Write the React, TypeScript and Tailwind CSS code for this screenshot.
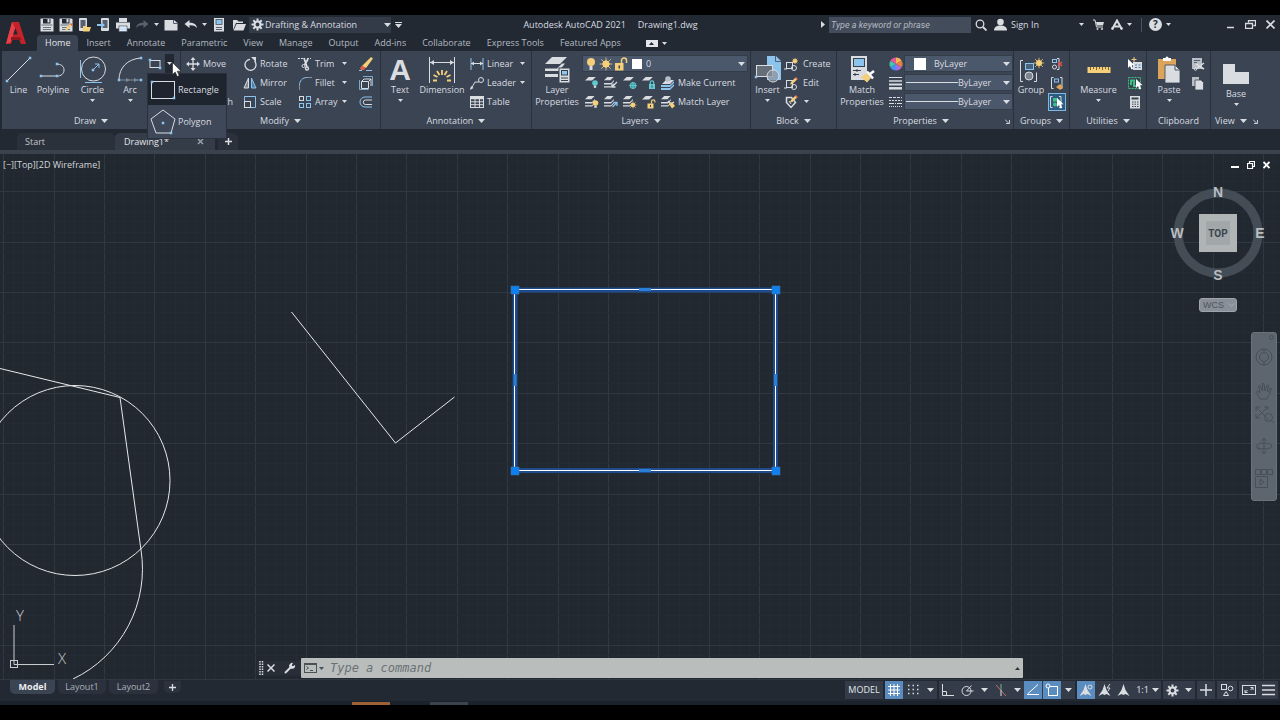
import type { ReactNode } from "react";

const LIGHT = "#d9dce0";
const BLUE = "#8cc4ee";
const YELLOW = "#f5cf7a";
const TEAL = "#62c9cf";
const GREEN = "#3fbf83";
const ORANGE = "#dca35a";

interface IconProps {
  w?: number;
  h?: number;
  children: ReactNode;
}

function Icon({ w = 14, h = 14, children }: IconProps) {
  return (
    <svg width={w} height={h} viewBox={`0 0 ${w} ${h}`} fill="none" stroke={LIGHT} className="shrink-0" aria-hidden="true">
      {children}
    </svg>
  );
}

function Caret({ wide = false }: { wide?: boolean }) {
  return wide ? (
    <svg width="7" height="4" viewBox="0 0 7 4" fill="#d9dce0" className="shrink-0" aria-hidden="true">
      <path d="M0 0h7L3.5 4z" />
    </svg>
  ) : (
    <svg width="5" height="3" viewBox="0 0 5 3" fill="#d9dce0" className="shrink-0" aria-hidden="true">
      <path d="M0 0h5L2.5 3z" />
    </svg>
  );
}

// square node used at the end points of the draw icons
const Node = ({ x, y }: { x: number; y: number }) => (
  <rect x={x - 1} y={y - 1} width="2" height="2" fill={BLUE} stroke={BLUE} strokeWidth="0.5" />
);

const Sheet = ({ y = 0, x = 0, s = 1 }: { y?: number; x?: number; s?: number }) => (
  <path d={`M${x + 4 * s} ${y}h${8 * s}l${-4 * s} ${4 * s}h${-8 * s}z`} fill={LIGHT} stroke="none" />
);

const Stack = () => (
  <g stroke="none">
    <Sheet x={0} y={1} s={0.8} />
    <path d="M0 7h7l3-3v1.3L7 8.500H0zM0 10.300h7l3-3v1.300l-3 3H0z" fill={LIGHT} />
  </g>
);

const Bulb = ({ x, y, c }: { x: number; y: number; c: string }) => (
  <g stroke="none">
    <circle cx={x} cy={y} r="2.800" fill={c} />
    <rect x={x - 1.2} y={y + 2.6} width="2.4" height="2.2" fill={LIGHT} />
  </g>
);

const Padlock = ({ x, y, c, open = false }: { x: number; y: number; c: string; open?: boolean }) => (
  <g>
    <path d={open ? `M${x + 4} ${y}v-2a1.700 1.700 0 0 1 3.400 0v1` : `M${x + 1.300} ${y}v-1.500a1.700 1.700 0 0 1 3.400 0V${y}`} stroke={c} strokeWidth="1.200" />
    <rect x={x} y={y} width="6" height="5" fill={c} stroke="none" />
    <rect x={x + 2.5} y={y + 1.5} width="1" height="2" fill="#3b4453" stroke="none" />
  </g>
);

const Sun = ({ x, y, r = 2.2, c = YELLOW }: { x: number; y: number; r?: number; c?: string }) => (
  <g stroke={c} strokeWidth="1">
    <circle cx={x} cy={y} r={r} fill={c} />
    <path
      d={`M${x} ${y - r * 2}V${y + r * 2}M${x - r * 2} ${y}H${x + r * 2}M${x - r * 1.5} ${y - r * 1.5}L${x + r * 1.5} ${y + r * 1.5}M${x + r * 1.5} ${y - r * 1.5}L${x - r * 1.5} ${y + r * 1.5}`}
      strokeWidth="0.800"
    />
  </g>
);

const Pencil = ({ x, y, s = 1 }: { x: number; y: number; s?: number }) => (
  <g stroke="none" transform={`translate(${x} ${y}) scale(${s})`}>
    <path d="M0 7.500L1 5l4.500-4.500L7.300 2.300 2.500 7z" fill={YELLOW} />
    <path d="M5 1L6 0l2 2-1 1z" fill="#e0604f" />
  </g>
);

const Cursor = ({ x, y }: { x: number; y: number }) => (
  <path d={`M${x} ${y}v9l2-2 1.500 3.500 1.700-.8L${x + 3.700} ${y + 6.300}h2.800z`} fill="#fff" stroke="none" />
);

const Gear = ({ c = LIGHT, hole = "#3b4453" }: { c?: string; hole?: string }) => (
  <Icon w={13} h={13}>
    <circle cx="6.500" cy="6.500" r="4" fill={c} stroke="none" />
    <path d="M6.500 .5v12M.5 6.500h12M2.300 2.300l8.400 8.400M10.700 2.300l-8.400 8.400" stroke={c} strokeWidth="2" />
    <circle cx="6.500" cy="6.500" r="1.900" fill={hole} stroke="none" />
  </Icon>
);

/* ---------- quick access toolbar ---------- */

const Floppy = () => (
  <>
    <path d="M.5.500h12l1 1v12H.500z" fill={LIGHT} stroke="none" />
    <rect x="3" y="1" width="7.500" height="4.500" fill="#222933" stroke="none" />
    <rect x="7.500" y="1" width="2" height="3.500" fill={LIGHT} stroke="none" />
    <path d="M1.500 7h11M3 9.500h8M3 11.500h8" stroke="#4d5663" strokeWidth=".8" />
  </>
);

const quickTools: { label: string; width: string; icon: ReactNode }[] = [
  { label: "Save", width: "w-[19px]", icon: <Icon><Floppy /></Icon> },
  { label: "Save As", width: "w-[19px]", icon: <Icon><Floppy /><Pencil x={6} y={5} /></Icon> },
  {
    label: "Open from mobile",
    width: "w-[19px]",
    icon: (
      <Icon>
        <rect x="1" y="0" width="8" height="13" rx="1" fill={LIGHT} stroke="none" />
        <rect x="2.500" y="2" width="5" height="8" fill="#566070" stroke="none" />
        <path d="M5 8h3l1 1h4l-1.500 4.500H5z" fill={YELLOW} stroke="none" />
      </Icon>
    ),
  },
  {
    label: "Save to mobile",
    width: "w-[19px]",
    icon: (
      <Icon>
        <rect x="4" y="0" width="8" height="13" rx="1" fill={LIGHT} stroke="none" />
        <rect x="5.500" y="2" width="5" height="8" fill="#566070" stroke="none" />
        <path d="M0 6h4V4l4 3-4 3V8H0z" fill={BLUE} stroke="none" />
      </Icon>
    ),
  },
  {
    label: "Plot",
    width: "w-[19px]",
    icon: (
      <Icon>
        <path d="M3 0h8v4H3zM0 4.500h14v6H0z" fill={LIGHT} stroke="none" />
        <rect x="3" y="8" width="8" height="5.500" fill="#fff" stroke="#566070" strokeWidth=".8" />
        <path d="M4 10h6M4 11.800h6" stroke={BLUE} strokeWidth=".8" />
      </Icon>
    ),
  },
  {
    label: "Redo",
    width: "w-[19px]",
    icon: <Icon><path d="M13.500 6L8.500 2v2.700C4 4.700 1.500 6.500 1 10c2-2.300 4-2.800 7.500-2.700V10z" fill="#59616d" stroke="none" /></Icon>,
  },
  { label: "Redo list", width: "w-[10px]", icon: <Caret /> },
  {
    label: "New",
    width: "w-[20px]",
    icon: <Icon><path d="M.5 2H10l3.500 3v7.500H.500z" fill={LIGHT} stroke="none" /><path d="M9.500 2v3.500h4" stroke="#566070" /></Icon>,
  },
  {
    label: "Undo",
    width: "w-[20px]",
    icon: <Icon><path d="M.5 6l5-4v2.700C10 4.700 12.500 6.500 13 10c-2-2.300-4-2.800-7.500-2.700V10z" fill={LIGHT} stroke="none" /></Icon>,
  },
  { label: "Undo list", width: "w-[7px]", icon: <Caret /> },
  {
    label: "Plot preview",
    width: "w-[21px]",
    icon: (
      <Icon>
        <rect x="2" y="0" width="10" height="13.500" fill={LIGHT} stroke="none" />
        <rect x="4" y="1.500" width="6" height="5" fill={BLUE} stroke="#41505f" strokeWidth=".8" />
        <path d="M4 9.500h6M4 11.500h6" stroke="#566070" />
      </Icon>
    ),
  },
  {
    label: "Open",
    width: "w-[20px]",
    icon: <Icon><path d="M1 12V2h4l1.500 1.500H11V5H4z" fill={LIGHT} stroke="none" /><path d="M4.500 6H14l-2.500 6.500H1.500z" fill={LIGHT} stroke="none" /></Icon>,
  },
];

/* ---------- ribbon parts ---------- */

interface BigButtonProps {
  label: string;
  icon: ReactNode;
  width: string;
  caret?: boolean;
}

function BigButton({ label, icon, width, caret }: BigButtonProps) {
  return (
    <button type="button" className={`flex shrink-0 flex-col items-center pt-[2px] leading-[12px] hover:bg-[#4a5464] ${width}`}>
      <span className="flex h-[28px] items-center">{icon}</span>
      <span className="whitespace-pre-line">{label}</span>
      {caret && <span className="mt-[3px]"><Caret /></span>}
    </button>
  );
}

interface RowButtonProps {
  label: string;
  icon: ReactNode;
  text?: boolean;
  caret?: boolean;
}

function RowButton({ label, icon, text = true, caret }: RowButtonProps) {
  return (
    <button type="button" aria-label={label} className="flex h-[19px] w-full items-center gap-[3px] hover:bg-[#4a5464]">
      {icon}
      {text && <span className="whitespace-nowrap">{label}</span>}
      {caret && <span className="ml-auto"><Caret /></span>}
    </button>
  );
}

interface PanelProps {
  title: string;
  width: string;
  menu?: boolean;
  launcher?: boolean;
  children: ReactNode;
}

function Panel({ title, width, menu = true, launcher, children }: PanelProps) {
  return (
    <section className={`flex flex-col border-r border-[#2a313d] ${width}`}>
      <div className="flex h-[62px] pt-[3px]">{children}</div>
      <div className="flex h-[16px] items-center">
        <button type="button" className="flex flex-1 items-center justify-center gap-[5px]">
          {title}
          {menu && <Caret wide />}
        </button>
        {launcher && (
          <button type="button" aria-label={`${title} settings`} className="mr-[3px]">
            <Icon w={5} h={5}><path d="M0 .5l3.500 3.500M4.500 1v3.500H1" strokeWidth=".9" /></Icon>
          </button>
        )}
      </div>
    </section>
  );
}

interface ComboProps {
  label: string;
  value: string;
  before?: ReactNode;
  className?: string;
}

function Combo({ label, value, before, className = "" }: ComboProps) {
  return (
    <div className={`flex h-[17px] items-center border border-[#343c4a] bg-[#4b576a] ${className}`}>
      {before}
      <select aria-label={label} className="min-w-0 flex-1 appearance-none bg-transparent outline-none">
        <option>{value}</option>
      </select>
      <span className="pointer-events-none px-[2px]"><Caret wide /></span>
    </div>
  );
}

const RectIcon = () => (
  <Icon>
    <rect x="2" y="3.500" width="10" height="7" />
    <Node x={2} y={3} />
    <Node x={12} y={11} />
  </Icon>
);

function DrawPanel() {
  return (
    <div className="relative flex">
      <Panel title="Draw" width="w-[179px]">
        <BigButton label="Line" width="w-[33px]" icon={<Icon w={28} h={28}><path d="M2 25L25 2" /><Node x={2} y={25} /><Node x={25} y={2} /></Icon>} />
        <BigButton
          label="Polyline"
          width="w-[36px]"
          icon={<Icon w={28} h={28}><path d="M2 20h16c4 0 7-2 7-6s-3-6-8-6" /><Node x={2} y={20} /><Node x={18} y={20} /><Node x={18} y={8} /></Icon>}
        />
        <BigButton
          label="Circle"
          width="w-[43px]"
          caret
          icon={
            <Icon w={28} h={28}>
              <circle cx="14.500" cy="13" r="12" />
              <path d="M1.500 4v18M6 26.500h17M14 14l6-6M20 8v4M20 8h-4" stroke={BLUE} />
              <Node x={14} y={14} />
            </Icon>
          }
        />
        <BigButton
          label="Arc"
          width="w-[32px]"
          caret
          icon={<Icon w={28} h={28}><path d="M3 24C3 12 11 3 25 2" /><path d="M3 24h22" stroke="#7f8996" /><path d="M10 22l4 2-4 2zM18 22l4 2-4 2z" fill="#7f8996" stroke="none" /><Node x={3} y={24} /><Node x={25} y={2} /><Node x={25} y={24} /></Icon>}
        />
        <div className="flex w-[28px] flex-col">
          <button type="button" aria-label="Rectangle tools" aria-expanded="true" className="flex h-[19px] items-center gap-[3px] pl-[2px]">
            <RectIcon />
            <span className="flex h-full w-[10px] items-center justify-center bg-[#222831]"><Caret /></span>
          </button>
        </div>
      </Panel>
      <ul className="absolute top-[22px] left-[145px] z-20 w-[80px] border border-[#2a313d] bg-[#3f4858]">
        <li>
          <button type="button" className="flex h-[31px] w-full items-center gap-[2px] bg-[#1f252e] pl-[2px]">
            <Icon w={26} h={22}><rect x="1.500" y="2.500" width="23" height="17" /><Node x={2} y={3} /><Node x={24} y={19} /></Icon>
            Rectangle
          </button>
        </li>
        <li>
          <button type="button" className="flex h-[33px] w-full items-center gap-[2px] pl-[2px]">
            <Icon w={26} h={26}><path d="M13 1l12 9-4 14H6L1 10z" /><Node x={13} y={14} /><Node x={21} y={24} /></Icon>
            Polygon
          </button>
        </li>
      </ul>
      {/* pointer resting on the open fly-out arrow */}
      <svg width="10" height="15" viewBox="0 0 10 15" className="absolute top-[11px] left-[170px] z-30" aria-hidden="true">
        <path d="M.5.500v12l2.700-2.500 2 4.500 2-1-2-4.300h3.800z" fill="#fff" stroke="#222" strokeWidth=".6" />
      </svg>
    </div>
  );
}

function ModifyPanel() {
  return (
    <Panel title="Modify" width="w-[200px]">
      <div className="w-[58px] pl-[5px]">
        <RowButton label="Move" icon={<Icon><path d="M7 2v10M2 7h10" strokeWidth="1.300" /><path d="M7 0l2.500 3h-5zM7 14l2.500-3h-5zM0 7l3-2.500v5zM14 7l-3-2.500v5z" fill={LIGHT} stroke="none" /></Icon>} />
        <RowButton text={false} label="Copy" icon={<Icon><circle cx="5" cy="5" r="3.500" /><circle cx="9" cy="9" r="3.500" stroke={BLUE} /></Icon>} />
        <RowButton label="Stretch" icon={<Icon><rect x="1.500" y="4.500" width="7" height="8" /><path d="M9 4h4v8" stroke={BLUE} /></Icon>} />
      </div>
      <div className="w-[56px] pl-[4px]">
        <RowButton label="Rotate" icon={<Icon><path d="M11.500 4A5.500 5.500 0 1 1 7 2.300" strokeWidth="1.300" /><path d="M8 0h5v5z" fill={LIGHT} stroke="none" /></Icon>} />
        <RowButton label="Mirror" icon={<Icon><path d="M5.500 2v10H1z" fill="#7c8795" /><path d="M8.500 2v10H13z" fill="#4c7ea6" stroke={BLUE} /></Icon>} />
        <RowButton label="Scale" icon={<Icon><path d="M1.500 6.500V1.500h11v11H7.500" stroke={BLUE} /><rect x="1.500" y="6.500" width="6" height="6" /></Icon>} />
      </div>
      <div className="w-[56px] pr-[4px] pl-[3px]">
        <RowButton label="Trim" caret icon={<Icon><path d="M0 1.500h5M9 1.500h4" strokeDasharray="2 1" /><path d="M6 1l3 9M10 2L6.500 8" strokeWidth="1.800" /><circle cx="5.500" cy="9" r="1.500" /><circle cx="9" cy="11.500" r="1.500" strokeWidth="1.400" /></Icon>} />
        <RowButton label="Fillet" caret icon={<Icon><path d="M1.500 14V9C1.500 5 4.500 1.500 9 1.500" stroke={BLUE} /><path d="M9 1.500h5M1.500 9v5" stroke="#87919e" /></Icon>} />
        <RowButton label="Array" caret icon={<Icon><rect x="1.500" y="1.500" width="4" height="4" /><rect x="8.500" y="1.500" width="4" height="4" stroke={BLUE} /><rect x="1.500" y="8.500" width="4" height="4" stroke={BLUE} /><rect x="8.500" y="8.500" width="4" height="4" stroke={BLUE} /></Icon>} />
      </div>
      <div className="w-[22px] pl-[8px]">
        <RowButton text={false} label="Erase" icon={<Icon><path d="M3 9l9-9 2 1.500-7 9.500z" fill={YELLOW} stroke="none" /><path d="M1 11l2-2.500 3.500 2.500L5 13H2z" fill="#e0604f" stroke="none" /><path d="M0 13.500h3M7 13.500h6" stroke={BLUE} /></Icon>} />
        <RowButton text={false} label="Explode" icon={<Icon><path d="M2.500 5.500h7v7h-7zM5 3h7v7M2.500 5.500L5 3M9.500 5.500L12 3" /><path d="M.5 4v9.500h9M4 .5h9.500V10" stroke={BLUE} strokeWidth=".8" /></Icon>} />
        <RowButton text={false} label="Offset" icon={<Icon><path d="M13 2H6a5 5 0 0 0 0 10h7" stroke={BLUE} /><path d="M13 5H6.500a2 2 0 0 0 0 4.500H13" /></Icon>} />
      </div>
    </Panel>
  );
}

function AnnotationPanel() {
  return (
    <Panel title="Annotation" width="w-[151px]">
      <BigButton
        label="Text"
        width="w-[38px]"
        caret
        icon={<span className="font-['Liberation_Sans',sans-serif] text-[30px] leading-[24px] font-bold">A</span>}
      />
      <BigButton
        label="Dimension"
        width="w-[46px]"
        icon={
          <Icon w={28} h={28}>
            <path d="M1.500 1v26M26.500 1v26M2 6.500h24" />
            <path d="M2 6.500l4-2.500v5zM26 6.500l-4-2.500v5z" fill={LIGHT} stroke="none" />
            <path d="M14 14v5M9 15l2.500 4M19 15l-2.500 4M5.500 19l4 2M22.500 19l-4 2M5 24.500h4M19 24.500h4" stroke={YELLOW} strokeWidth="1.800" />
          </Icon>
        }
      />
      <div className="w-[60px] pl-[5px]">
        <RowButton label="Linear" caret icon={<Icon><path d="M1 1v12M13 1v12" stroke={BLUE} /><path d="M1 6.500h12" /><path d="M1 6.500l3-2v4zM13 6.500l-3-2v4z" fill={LIGHT} stroke="none" /></Icon>} />
        <RowButton label="Leader" caret icon={<Icon><path d="M1 13L5 6h4" /><circle cx="11" cy="4" r="2.500" /><path d="M0 14l1-4 2.500 2z" fill={LIGHT} stroke="none" /></Icon>} />
        <RowButton label="Table" icon={<Icon><rect x=".5" y="1.500" width="13" height="11" /><path d="M0 3h14" strokeWidth="2.500" /><path d="M1 6.800h12M1 9.700h12M5 4v8M9.500 4v8" /></Icon>} />
      </div>
    </Panel>
  );
}

const layerTools: { label: string; icon: ReactNode }[][] = [
  [
    { label: "Layer off", icon: <Icon><Sheet x={0} y={1} s={0.9} /><Bulb x={10} y={7} c={TEAL} /></Icon> },
    { label: "Isolate layer", icon: <Icon><Stack /><path d="M13 6l-4 4M8 7.500v3.500h3.500" strokeWidth="1.300" /></Icon> },
    { label: "Freeze layer", icon: <Icon><Sheet x={0} y={1} s={0.9} /><circle cx="10" cy="9.500" r="3" stroke={TEAL} fill="#3a8e96" /><path d="M10 6v7M6.500 9.500h7" stroke={TEAL} /></Icon> },
    { label: "Lock layer", icon: <Icon><Sheet x={0} y={1} s={0.9} /><Padlock x={7} y={8} c={TEAL} /></Icon> },
    { label: "Make Current", icon: <Icon><path d="M0 9h9l4-4v2l-4 4H0zM0 12h9l4-4v2l-4 4H0z" fill={BLUE} stroke="none" /><Sheet x={1} y={4} s={1} /><circle cx="7" cy="3" r="2.800" fill="#b6bdc6" stroke="none" /></Icon> },
  ],
  [
    { label: "Turn all layers on", icon: <Icon><Stack /><Bulb x={10.500} y={8} c={YELLOW} /></Icon> },
    { label: "Unisolate layer", icon: <Icon><Stack /><path d="M8.500 12l4-4M9.500 7.500H13V11" stroke={BLUE} strokeWidth="1.300" /></Icon> },
    { label: "Thaw all layers", icon: <Icon><Stack /><Sun x={10} y={10} r={1.700} /></Icon> },
    { label: "Unlock layer", icon: <Icon><Sheet x={0} y={1} s={0.9} /><Padlock x={5.500} y={8.500} c={YELLOW} open /></Icon> },
    { label: "Match Layer", icon: <Icon><Stack /><path d="M7 6l3 3 3-2" strokeWidth="1.500" /><path d="M8 9l3-2 3 4-3 2.500z" fill={YELLOW} stroke="none" /></Icon> },
  ],
];

function LayersPanel() {
  return (
    <Panel title="Layers" width="w-[219px]">
      <BigButton
        label={"Layer\nProperties"}
        width="w-[50px]"
        icon={
          <Icon w={28} h={28}>
            <path d="M9 1h15l-7 7H2z" fill={LIGHT} stroke="none" />
            <path d="M2 12.500h12l5-5h3l-6 7.500H2z" fill={LIGHT} stroke="none" />
            <path d="M2 18h13v3H2z" fill={LIGHT} stroke="none" />
            <rect x="16" y="12" width="11" height="15" fill={LIGHT} stroke="#3b4453" />
            <rect x="18.500" y="14.500" width="6" height="4.500" fill={BLUE} stroke="#37424f" />
            <path d="M18 22h7M18 24.500h7" stroke="#37424f" />
          </Icon>
        }
      />
      <div className="flex-1">
        <Combo
          label="Current layer"
          value="0"
          className="mt-[1px] mr-[2px] mb-[1px]"
          before={
            <span className="mr-[4px] flex items-center gap-px pl-[1px]">
              <Icon><circle cx="7" cy="5" r="4" fill={YELLOW} stroke="none" /><rect x="5.500" y="9" width="3" height="4" fill={LIGHT} stroke="none" /></Icon>
              <Icon><Sun x={7} y={7} r={3.200} /></Icon>
              <Icon><path d="M7.500 6V3.500a2.500 2.500 0 0 1 5 0V6" stroke={YELLOW} strokeWidth="1.500" /><rect x="1" y="6" width="8.500" height="7.500" fill={YELLOW} stroke="none" /><rect x="4.500" y="8.500" width="1.500" height="3" fill="#3b4453" stroke="none" /></Icon>
              <span className="ml-[3px] h-[10px] w-[10px] bg-white" />
            </span>
          }
        />
        {layerTools.map((row, i) => (
          <div key={i} className="flex h-[19px] items-center gap-[5px] pl-[3px]">
            {row.map((tool, j) => (
              <button key={tool.label} type="button" aria-label={tool.label} className="flex items-center gap-[3px] whitespace-nowrap">
                {tool.icon}
                {j === 4 && <span>{tool.label}</span>}
              </button>
            ))}
          </div>
        ))}
      </div>
    </Panel>
  );
}

function BlockPanel() {
  return (
    <Panel title="Block" width="w-[86px]">
      <BigButton
        label="Insert"
        width="w-[33px]"
        caret
        icon={
          <Icon w={28} h={28}>
            <path d="M13 0h9l5 5v19H13z" fill={BLUE} stroke="none" />
            <path d="M21.500 0v5.500H27" stroke="#3b4453" strokeWidth=".8" />
            <rect x="2.500" y="9.500" width="16" height="11" fill="#666e79" />
            <circle cx="19" cy="20" r="6" fill="#8b939d" fillOpacity=".7" />
            <Node x={2} y={21} />
          </Icon>
        }
      />
      <div className="w-[50px]">
        <RowButton label="Create" icon={<Icon w={16}><rect x="2.500" y="5.500" width="6" height="6" /><circle cx="10" cy="11" r="2.500" /><path d="M0 12h3" /><Sun x={11} y={4} r={1.500} /></Icon>} />
        <RowButton label="Edit" icon={<Icon w={16}><rect x="2.500" y="4.500" width="6" height="7" /><circle cx="10" cy="11" r="2.500" /><path d="M0 12h3" /><Pencil x={6} y={1} /></Icon>} />
        <button type="button" aria-label="Edit attributes" className="flex h-[19px] items-center gap-[4px]">
          <Icon w={16}><path d="M2.500 2.500h5l4 5-4.500 5-4.500-5z" strokeWidth="1.500" /><path d="M5 6l2 3" /><Pencil x={6} y={0} /></Icon>
          <Caret />
        </button>
      </div>
    </Panel>
  );
}

function PropertiesPanel() {
  return (
    <Panel title="Properties" width="w-[177px]" launcher>
      <BigButton
        label={"Match\nProperties"}
        width="w-[50px]"
        icon={
          <Icon w={28} h={28}>
            <path d="M3 0h16v24H3z" fill={LIGHT} stroke="none" />
            <rect x="5.500" y="2.500" width="11" height="8" fill={BLUE} stroke="#37424f" />
            <path d="M5 14.500h8M5 18.500h6M9 13v3M7 17v3" stroke="#37424f" />
            <path d="M13 21l6-4 4 5-4 4.500z" fill={YELLOW} stroke="none" />
            <path d="M19 15.500l6 7" stroke="#fff" strokeWidth="2.500" />
            <path d="M22 18l4-3" stroke="#fff" strokeWidth="2.500" />
          </Icon>
        }
      />
      <div className="flex w-[17px] flex-col items-center">
        <span className="flex h-[19px] items-center">
          <Icon>
            <g stroke="none">
              <path d="M7 7V.5a6.500 6.500 0 0 1 5.600 3.200z" fill="#f3b552" />
              <path d="M7 7l5.600-3.300a6.500 6.500 0 0 1 0 6.600z" fill="#ef7c45" />
              <path d="M7 7l5.600 3.300A6.500 6.500 0 0 1 7 13.500z" fill="#a46de0" />
              <path d="M7 7v6.500a6.500 6.500 0 0 1-5.600-3.200z" fill="#4f8df0" />
              <path d="M7 7l-5.600 3.300a6.500 6.500 0 0 1 0-6.600z" fill="#45c6a5" />
              <path d="M7 7L1.400 3.700A6.500 6.500 0 0 1 7 .5z" fill="#e4589b" />
            </g>
          </Icon>
        </span>
        <span className="flex h-[19px] items-center"><Icon><path d="M0 1.500h13" /><path d="M0 5h13" strokeWidth="1.500" /><path d="M0 8.500h13" strokeWidth="2" /><path d="M0 12.300h13" strokeWidth="2.500" /></Icon></span>
        <span className="flex h-[19px] items-center"><Icon><path d="M0 2.500h13" strokeDasharray="3 1" /><path d="M0 5.500h13" strokeDasharray="2 1" /><path d="M0 8.500h13" strokeDasharray="5 1 1 1" /><path d="M0 11.500h13" strokeDasharray="1 1" /></Icon></span>
      </div>
      <div className="flex flex-1 flex-col gap-[2px] pt-[1px]">
        <Combo label="Object color" value="ByLayer" before={<span className="mr-[8px] ml-[9px] h-[12px] w-[12px] bg-white" />} />
        <Combo label="Lineweight" value="ByLayer" before={<span className="ml-[1px] h-px w-[52px] bg-[#d9dce0]" />} />
        <Combo label="Linetype" value="ByLayer" before={<span className="ml-[1px] h-px w-[52px] bg-[#d9dce0]" />} />
      </div>
    </Panel>
  );
}

const Brackets = () => <path d="M3.500 1.500h-2v11h2M10 1.500h2v11h-2" />;

function GroupsPanel() {
  return (
    <Panel title="Groups" width="w-[56px]">
      <BigButton
        label="Group"
        width="w-[34px]"
        icon={
          <Icon w={28} h={28}>
            <path d="M6 4.500H3.500v21H6M17 25.500h2.500v-9" />
            <rect x="8.500" y="7.500" width="8" height="6" stroke={BLUE} fill="#47637d" />
            <circle cx="12" cy="20" r="4" fill="#7c8591" />
            <Sun x={22} y={7} r={2.600} />
          </Icon>
        }
      />
      <div className="flex flex-col items-center">
        <RowButton text={false} label="Ungroup" icon={<Icon w={18}><path d="M9 1.500h2v11H9" /><rect x="4.500" y="2.500" width="4" height="3" stroke={BLUE} /><circle cx="6.500" cy="10" r="2" /><path d="M10 5l4 4M14 5l-4 4" stroke="#e0504a" strokeWidth="1.500" /></Icon>} />
        <RowButton text={false} label="Group edit" icon={<Icon w={18}><g transform="translate(2 0)"><Brackets /><rect x="4.500" y="3" width="4" height="3" stroke={BLUE} /><path d="M6 11l4-3 3 3-3 3z" fill={ORANGE} stroke="none" /></g></Icon>} />
        <button type="button" aria-label="Group selection on/off" aria-pressed="true" className="mt-[1px] flex h-[18px] w-[18px] items-center justify-center border border-[#7fb8e6] bg-[#2f5b80]">
          <Icon w={16}><Brackets /><rect x="4" y="3" width="5" height="3.500" fill={GREEN} stroke="none" /><circle cx="6" cy="9.500" r="2" fill={GREEN} stroke="none" /><Cursor x={8} y={3} /></Icon>
        </button>
      </div>
    </Panel>
  );
}

function UtilitiesPanel() {
  return (
    <Panel title="Utilities" width="w-[77px]">
      <BigButton
        label="Measure"
        width="w-[57px]"
        caret
        icon={
          <Icon w={28} h={28}>
            <rect x="2.500" y="11" width="23" height="6" fill={YELLOW} stroke="none" />
            <path d="M5.500 11v3M8.500 11v2M11.500 11v3M14.500 11v2M17.500 11v3M20.500 11v2M23.500 11v3" stroke="#7a6433" />
          </Icon>
        }
      />
      <div className="flex flex-col">
        <RowButton text={false} label="Quick select" icon={<Icon w={16}><rect x="6" y="5" width="9" height="8" fill={LIGHT} stroke="none" /><path d="M8 8h2M11.500 8h2M8 10.500h2M11.500 10.500h2" stroke="#3f81b8" /><Cursor x={1} y={2} /><path d="M7 0v5M4.500 2.500h5" stroke={YELLOW} /></Icon>} />
        <RowButton text={false} label="Select all" icon={<Icon w={16}><rect x="1.500" y="1.500" width="12" height="11" stroke={GREEN} strokeDasharray="2 1" /><path d="M4 9V4.500h3V10h3" stroke={GREEN} strokeWidth="2" /><Cursor x={9} y={3} /></Icon>} />
        <RowButton text={false} label="Quick calculator" icon={<Icon w={16}><rect x="3" y="1" width="10" height="12.500" fill={LIGHT} stroke="none" /><path d="M4.500 3.500h7" stroke="#37424f" strokeWidth="2" /><path d="M5 7h6.500M5 9.200h6.500M5 11.500h6.500" stroke="#37424f" strokeDasharray="1.500 1" /></Icon>} />
      </div>
    </Panel>
  );
}

function ClipboardPanel() {
  return (
    <Panel title="Clipboard" width="w-[64px]" menu={false}>
      <BigButton
        label="Paste"
        width="w-[44px]"
        caret
        icon={
          <Icon w={28} h={28}>
            <rect x="3" y="3" width="18" height="20" fill={ORANGE} stroke="none" />
            <path d="M8 5V2h2.500a1.500 1.500 0 0 1 3 0H16v3z" fill="#fff" stroke="none" />
            <path d="M10 9h10l5 5v13H10z" fill={LIGHT} stroke="#3b4453" strokeWidth=".8" />
            <path d="M20 9v5h5" stroke="#4d5663" />
          </Icon>
        }
      />
      <div className="flex flex-col">
        <RowButton text={false} label="Cut" icon={<Icon><rect x="1" y="1" width="10" height="11" fill="#b9bec5" stroke="none" /><path d="M3 3.500h6M3 5.500h3" stroke="#566070" /><path d="M5 12l8-6M5 7l8 5" strokeWidth="1.500" /><circle cx="4.500" cy="12" r="1.300" /></Icon>} />
        <RowButton text={false} label="Copy clip" icon={<Icon><path d="M1 1h7v9H1z" fill="#b9bec5" stroke="none" /><path d="M4 4h6l2.500 2.500V14H4z" fill={LIGHT} stroke="#3b4453" strokeWidth=".8" /></Icon>} />
      </div>
    </Panel>
  );
}

function ViewPanel() {
  return (
    <section className="flex min-w-[66px] flex-1 flex-col">
      <div className="flex h-[62px] pt-[7px]">
        <BigButton label="Base" width="w-[50px]" caret icon={<Icon w={28} h={28}><path d="M1 4h12v8h14v12H1z" fill={LIGHT} stroke="none" /></Icon>} />
      </div>
      <div className="flex h-[16px] items-center gap-[6px] pl-[4px]">
        <button type="button" className="flex items-center gap-[5px]">View<Caret wide /></button>
        <button type="button" aria-label="View settings"><Icon w={5} h={5}><path d="M0 .5l3.500 3.500M4.500 1v3.500H1" strokeWidth=".9" /></Icon></button>
      </div>
    </section>
  );
}

/* ---------- header ---------- */

const ribbonTabs = ["Home", "Insert", "Annotate", "Parametric", "View", "Manage", "Output", "Add-ins", "Collaborate", "Express Tools", "Featured Apps"];

function Header() {
  return (
    <header className="flex">
      <button type="button" aria-label="Application menu" className="w-[37px] shrink-0 pl-[5px]">
        <svg width="22" height="24" viewBox="0 0 22 24" aria-hidden="true">
          <path d="M7 1h7l7 22h-5l-2.500-6H7.500L6 23H1z" fill="#c5232b" />
          <path d="M7 1L1 23l5-2 4-14z" fill="#e8414a" />
          <path d="M10.500 7l-2.300 6.500h4.500z" fill="#222933" />
          <path d="M6 16h9l1.500 3H6z" fill="#8e1a20" />
        </svg>
      </button>
      <div className="min-w-0 flex-1">
        <div className="flex h-[19px] items-center">
          {quickTools.map((tool) => (
            <button key={tool.label} type="button" aria-label={tool.label} className={`flex shrink-0 justify-center ${tool.width}`}>
              {tool.icon}
            </button>
          ))}
          <div className="flex h-[16px] w-[142px] shrink-0 items-center bg-[#333b48] pl-[2px]">
            <Gear hole="#333b48" />
            <select aria-label="Workspace" className="ml-px min-w-0 flex-1 appearance-none bg-transparent outline-none">
              <option>Drafting &amp; Annotation</option>
            </select>
            <span className="pointer-events-none"><Caret wide /></span>
          </div>
          <button type="button" aria-label="Customize toolbar" className="flex w-[14px] shrink-0 justify-center">
            <Icon w={7} h={6}><path d="M0 .5h7" /><path d="M0 2h7L3.500 6z" fill={LIGHT} stroke="none" /></Icon>
          </button>
          <h1 className="flex flex-1 justify-center gap-[12px] whitespace-nowrap">
            <span>Autodesk AutoCAD 2021</span>
            <span>Drawing1.dwg</span>
          </h1>
          <button type="button" aria-label="Collapse search" className="flex w-[13px] justify-center">
            <Icon w={4} h={7}><path d="M0 0l4 3.500L0 7z" fill={LIGHT} stroke="none" /></Icon>
          </button>
          <input
            type="text"
            aria-label="Search"
            placeholder="Type a keyword or phrase"
            className="h-[16px] w-[142px] bg-[#434c5b] px-[2px] font-['Roboto',sans-serif] italic placeholder-[#b4b9c0] outline-none"
          />
          <button type="button" aria-label="Run search" className="flex w-[20px] justify-center">
            <Icon w={12} h={12}><circle cx="5" cy="5" r="3.800" strokeWidth="1.300" /><path d="M8 8l3.500 3.500" strokeWidth="1.800" /></Icon>
          </button>
          <button type="button" className="flex w-[83px] items-center gap-[4px] pl-[3px]">
            <Icon w={13} h={13}><circle cx="6.500" cy="4" r="3.300" fill={LIGHT} stroke="none" /><path d="M0 12.500c0-3.500 2.500-5 6.500-5s6.500 1.500 6.500 5z" fill={LIGHT} stroke="none" /></Icon>
            Sign In
          </button>
          <button type="button" aria-label="Account menu" className="flex w-[14px] justify-center"><Caret /></button>
          <button type="button" aria-label="App store" className="flex w-[20px] justify-center">
            <Icon w={11} h={11}><path d="M0 1h2l1.500 7h6.500" /><path d="M3 3h8l-1 3.500H3.800z" fill={LIGHT} stroke="none" /><circle cx="4.500" cy="10" r=".7" /><circle cx="9" cy="10" r=".7" /></Icon>
          </button>
          <button type="button" aria-label="Stay connected" className="flex w-[26px] items-center gap-[4px] pl-[3px]">
            <Icon w={12} h={11}><path d="M1.500 9.500L6 1.500l4.500 8M3 7.500h6" strokeWidth="2" /><circle cx="1.500" cy="9.500" r="1" fill={LIGHT} /><circle cx="10.500" cy="9.500" r="1" fill={LIGHT} /></Icon>
            <Caret />
          </button>
          <span className="mx-[7px] h-[14px] w-px bg-[#4b5461]" />
          <button type="button" aria-label="Help" className="flex w-[72px] items-center gap-[4px]">
            <span className="flex h-[13px] w-[13px] items-center justify-center rounded-full bg-[#d9dce0] text-[10px] leading-[13px] font-bold text-[#222933]">?</span>
            <Caret />
          </button>
          <button type="button" aria-label="Minimize" className="flex w-[19px] justify-center"><Icon w={7} h={9}><path d="M0 7.500h7" strokeWidth="1.500" /></Icon></button>
          <button type="button" aria-label="Restore" className="flex w-[20px] justify-center"><Icon w={11} h={9}><path d="M3.500 2.500v-2h7v5h-2M.5 3.500h7v5h-7z" strokeWidth="1.300" /></Icon></button>
          <button type="button" aria-label="Close" className="flex w-[20px] justify-center"><Icon w={9} h={9}><path d="M.5.500l8 8M8.500.500l-8 8" strokeWidth="1.600" /></Icon></button>
        </div>
        <nav className="flex h-[17px] items-end text-[#b3b9c1]">
          {ribbonTabs.map((tab, i) => (
            <a
              key={tab}
              href={`#${tab}`}
              className={`flex h-[16px] shrink-0 items-center px-[8px] ${i === 0 ? "rounded-t-sm bg-[#3b4453] text-[#e4e6e9]" : ""}`}
            >
              {tab}
            </a>
          ))}
          <button type="button" aria-label="Minimize ribbon" className="ml-[17px] flex h-[16px] items-center gap-[4px]">
            <span className="flex h-[7px] w-[12px] items-center justify-center bg-[#e4e6e9]"><Icon w={5} h={3}><path d="M0 3h5L2.500 0z" fill="#222933" stroke="none" /></Icon></span>
            <Caret />
          </button>
        </nav>
      </div>
    </header>
  );
}

/* ---------- drawing area ---------- */

const GRID = 50.4;

function Drawing() {
  const columns = Array.from({ length: 200 }, (_, i) => i);
  const rows = Array.from({ length: 110 }, (_, i) => i);
  return (
    <svg className="absolute inset-0 h-full w-full" fill="none" aria-label="Model space">
      <g shapeRendering="crispEdges">
        {columns.map((i) => {
          const x = Math.floor(3.7 + (i * GRID) / 5) + 0.5;
          return <line key={i} x1={x} x2={x} y1="0" y2="100%" stroke={i % 5 === 0 ? "#303942" : "#242b34"} />;
        })}
        {rows.map((i) => {
          const y = Math.floor(37.7 + ((i - 3) * GRID) / 5) + 0.5;
          return <line key={i} x1="0" x2="100%" y1={y} y2={y} stroke={i % 5 === 3 ? "#303942" : "#242b34"} />;
        })}
      </g>
      <g stroke="#e6e8ea">
        <polyline points="291.500,158 395.500,289 454.500,243" />
        <circle cx="75" cy="326.500" r="95" />
        <path d="M0 214.500L120 243.500L141 396A122 122 0 0 1 73 525" />
      </g>
      <g>
        <rect x="515" y="136" width="260.500" height="180.500" stroke="#1f4a8c" strokeWidth="5" />
        <rect x="514.500" y="135.500" width="261" height="181" stroke="#fff" shapeRendering="crispEdges" />
        {[[515, 136], [776, 136], [515, 317], [776, 317]].map(([x, y]) => (
          <rect key={`${x}-${y}`} x={x - 4} y={y - 4} width="8" height="8" fill="#0f80f0" stroke="#3d6f9f" strokeWidth=".6" />
        ))}
        <path d="M639 135.500h12M639 316.500h12" stroke="#2a7fd4" strokeWidth="3" />
        <path d="M515 220v12M775.500 220v12" stroke="#2a7fd4" strokeWidth="3" />
      </g>
      <g stroke="#c9cccf">
        <path d="M14 471v39.500H54" />
        <rect x="10.500" y="506.500" width="7" height="7" />
      </g>
      <g fill="#c9cccf" className="font-['Open_Sans',sans-serif] text-[15px] font-light" textAnchor="middle">
        <text x="20" y="467">Y</text>
        <text x="62" y="510">X</text>
      </g>
    </svg>
  );
}

function ViewCube() {
  return (
    <div className="absolute top-[29px] right-[10px] flex w-[104px] flex-col items-center text-[#b9bdc0]">
      <svg width="104" height="104" viewBox="0 0 104 104" className="font-['Liberation_Sans',sans-serif] text-[14px] font-bold" textAnchor="middle" aria-label="View cube">
        <circle cx="52" cy="50" r="40" fill="none" stroke="#444c55" strokeWidth="9" />
        <g fill="#b9bdc0">
          <text x="52" y="14">N</text>
          <text x="11" y="55">W</text>
          <text x="94" y="55">E</text>
          <text x="52" y="97">S</text>
        </g>
        <rect x="33" y="31" width="38" height="38" fill="#b0b4b5" />
        <rect x="40" y="38" width="24" height="24" fill="#a2a7a9" />
        <text x="52" y="54" fill="#3c444c" className="font-['Roboto',sans-serif] text-[10px] font-bold">TOP</text>
      </svg>
      <button type="button" className="mt-[11px] flex h-[14px] w-[38px] items-center gap-[4px] rounded-[3px] border border-[#a0a5ab] bg-[#888f98] pl-[3px] font-['Liberation_Sans',sans-serif] text-[#4d555e]">
        WCS
        <Icon w={7} h={4}><path d="M.5.500l3 2.500 3-2.500" stroke="#a9aeb4" /></Icon>
      </button>
    </div>
  );
}

function NavigationBar() {
  const tool = "flex w-full justify-center";
  return (
    <div className="absolute top-[178px] right-[3px] flex h-[169px] w-[26px] flex-col items-center rounded-[3px] border border-[#6a727a] bg-[#5d666e] [&_svg]:stroke-[#474f58]">
      <div className="flex w-full justify-end p-[2px]"><Icon w={5} h={5}><circle cx="2.500" cy="2.500" r="2" /></Icon></div>
      <button type="button" aria-label="Steering wheel" className={`mt-[6px] ${tool}`}><Icon w={18} h={18}><circle cx="9" cy="9" r="8" /><circle cx="9" cy="9" r="4.500" /><path d="M9 1v3M9 14v3" /></Icon></button>
      <button type="button" aria-label="Pan" className={`mt-[16px] ${tool}`}><Icon w={18} h={18}><path d="M5 17L1 10l1.500-1L5 11 3.500 4l1.500-.5L7.500 9 7.500 1.500H9L10 9l2-6 1.500.5L12.500 10 15.500 6l1 .7L14 13l-2 4z" /></Icon></button>
      <button type="button" aria-label="Zoom" className={`mt-[5px] ${tool}`}><Icon w={20} h={18}><path d="M2 2l13 13M14 2L2 13M2 6V2h4M10 2h4v3M2 9v4h4" /><circle cx="14.500" cy="12.500" r="4" /><path d="M17 15l3 3" /></Icon></button>
      <button type="button" aria-label="Orbit" className={`mt-[15px] ${tool}`}><Icon w={18} h={16}><ellipse cx="9" cy="8" rx="8" ry="3" /><path d="M9 0v16M6.500 3L9 0l2.500 3M6.500 13L9 16l2.500-3M4 8l-2 2 3 2" /></Icon></button>
      <button type="button" aria-label="Show motion" className={`mt-[15px] ${tool}`}><Icon w={18} h={19}><path d="M.5.500h5v5h-5zM6.500.500h5v5h-5zM12.500.500h5v5h-5zM.5 7.500h12v11H.500zM5 10v6l4-3z" /></Icon></button>
    </div>
  );
}

function CommandLine() {
  return (
    <form className="absolute right-[257px] bottom-[1px] left-[257px] flex h-[20px] items-center text-[#d9dce0]">
      <span className="flex w-[44px] shrink-0 items-center bg-[#272e38] pl-[2px]">
        <Icon w={5} h={14}><path d="M1 0v14M3.500 0v14" strokeDasharray="1.500 1" strokeWidth="1.500" /></Icon>
        <button type="button" aria-label="Close command line" className="ml-[3px]"><Icon w={8} h={8}><path d="M.5.500l7 7M7.500.500l-7 7" strokeWidth="1.500" /></Icon></button>
        <button type="button" aria-label="Customize command line" className="ml-[9px]">
          <Icon w={12} h={12}><path d="M1 11l6-6" strokeWidth="2" /><path d="M11 3A3 3 0 1 1 9 1L7.800 3.200l1 1z" fill={LIGHT} stroke="none" /></Icon>
        </button>
      </span>
      <div className="flex h-full min-w-0 flex-1 items-center rounded-[1px] bg-[#b9bebd] pl-[3px]">
        <Icon w={13} h={10}><rect x=".5" y=".5" width="12" height="9" stroke="#4a5054" /><path d="M1 1.500h11" stroke="#4a5054" /><path d="M2.500 3.500l2 1.500-2 1.500M6 7.500h3" stroke="#4a5054" /></Icon>
        <Icon w={9} h={3}><path d="M2 0h5L4.500 3z" fill="#4a5054" stroke="none" /></Icon>
        <input
          type="text"
          aria-label="Command"
          placeholder="Type a command"
          className="ml-[4px] min-w-0 flex-1 bg-transparent font-['DejaVu_Sans_Mono',monospace] text-[12px] text-[#333] italic placeholder-[#6b7174] outline-none"
        />
        <button type="button" aria-label="Command history" className="px-[3px]"><Icon w={5} h={3}><path d="M0 3h5L2.500 0z" fill="#333" stroke="none" /></Icon></button>
      </div>
    </form>
  );
}

function DrawingArea() {
  return (
    <main className="relative min-h-[400px] flex-1 overflow-hidden bg-[#212830]">
      <Drawing />
      <div className="absolute top-[5px] left-[3px] flex text-[#d3d6d9]">
        <button type="button">[−]</button>
        <button type="button">[Top]</button>
        <button type="button">[2D Wireframe]</button>
      </div>
      <div className="absolute top-[7px] right-[10px] flex items-center gap-[8px]">
        <button type="button" aria-label="Minimize drawing"><Icon w={8} h={8}><path d="M0 6h8" stroke="#fff" strokeWidth="2" /></Icon></button>
        <button type="button" aria-label="Restore drawing"><Icon w={8} h={8}><path d="M2.500 2.500v-2h5v5h-2M.5 2.500h5v5h-5z" stroke="#fff" strokeWidth="1.200" /></Icon></button>
        <button type="button" aria-label="Close drawing"><Icon w={7} h={8}><path d="M.5 1l6 6M6.500 1l-6 6" stroke="#fff" strokeWidth="1.800" /></Icon></button>
      </div>
      <ViewCube />
      <NavigationBar />
      <CommandLine />
    </main>
  );
}

/* ---------- footer ---------- */

interface StatusButtonProps {
  label: string;
  width?: string;
  on?: boolean;
  children: ReactNode;
}

function StatusButton({ label, width = "w-[18px]", on, children }: StatusButtonProps) {
  return (
    <button
      type="button"
      aria-label={label}
      aria-pressed={on}
      className={`flex h-[18px] shrink-0 items-center justify-center ${width} ${on ? "bg-[#5b8cc0]" : ""}`}
    >
      {children}
    </button>
  );
}

const StatusGroup = ({ children }: { children: ReactNode }) => <div className="flex items-center gap-px bg-[#343c4a]">{children}</div>;

const Person = ({ extra }: { extra?: ReactNode }) => (
  <Icon><path d="M6.500 1l2 6 4 6-4-2-2 1-2-1-4 2 4-6z" fill={LIGHT} stroke="none" />{extra}</Icon>
);

function StatusBar() {
  return (
    <div className="flex h-[20px] items-center gap-[2px] pr-[2px] text-[#e4e6e9]">
      <StatusGroup><StatusButton label="Model space" width="w-[38px]"><span>MODEL</span></StatusButton></StatusGroup>
      <StatusGroup>
        <StatusButton label="Grid" on><Icon><path d="M3.500 1v12M7 1v12M10.500 1v12M1 3.500h12M1 7h12M1 10.500h12" stroke="#fff" /></Icon></StatusButton>
        <StatusButton label="Snap"><Icon><path d="M2 2.500h11M2 6.500h11M2 10.500h11" strokeWidth="1.500" strokeDasharray="1.500 3" /></Icon></StatusButton>
        <StatusButton label="Snap settings" width="w-[14px]"><Caret wide /></StatusButton>
      </StatusGroup>
      <StatusGroup>
        <StatusButton label="Ortho"><Icon><path d="M1.500 1v11.500H13M1.500 8.500h4v4" /></Icon></StatusButton>
        <StatusButton label="Polar tracking"><Icon><circle cx="6.500" cy="8" r="4.500" /><path d="M6.500 8h7M6.500 8l5-5.500" /></Icon></StatusButton>
        <StatusButton label="Polar settings" width="w-[14px]"><Caret wide /></StatusButton>
        <StatusButton label="Isometric drafting"><Icon><path d="M2 2l5 5.500L12 13" stroke="#d2686c" /><path d="M7 1v6" stroke="#67b78b" /><path d="M7 7v6" /></Icon></StatusButton>
        <StatusButton label="Isometric settings" width="w-[12px]"><Caret wide /></StatusButton>
        <StatusButton label="Object snap tracking" on><Icon><path d="M1.500 11L12 1.500M1 11.500h12" stroke="#fff" /></Icon></StatusButton>
        <StatusButton label="Object snap" on><Icon><rect x="3.500" y="3.500" width="9" height="9" stroke="#fff" /><circle cx="3" cy="3" r="2" fill="#5b8cc0" stroke="#fff" /></Icon></StatusButton>
        <StatusButton label="Object snap settings" width="w-[13px]"><Caret wide /></StatusButton>
      </StatusGroup>
      <StatusGroup>
        <StatusButton label="Annotation visibility" on><Person extra={<circle cx="11" cy="4" r="2" />} /></StatusButton>
        <StatusButton label="Auto scale"><Person extra={<path d="M12 1L9 5h3l-2 3" />} /></StatusButton>
        <StatusButton label="Annotation scale icon"><Person /></StatusButton>
        <StatusButton label="Annotation scale" width="w-[27px]"><span className="flex items-center gap-[3px]">1:1<Caret wide /></span></StatusButton>
      </StatusGroup>
      <StatusGroup>
        <StatusButton label="Workspace switching"><Gear hole="#343c4a" /></StatusButton>
        <StatusButton label="Workspace list" width="w-[13px]"><Caret wide /></StatusButton>
      </StatusGroup>
      <StatusGroup><StatusButton label="Annotation monitor"><Icon><path d="M7 1v12M1 7h12" strokeWidth="1.500" /></Icon></StatusButton></StatusGroup>
      <StatusGroup><StatusButton label="Isolate objects" width="w-[20px]"><Icon><rect x="1.500" y="1.500" width="5" height="5" /><circle cx="10.500" cy="5.500" r="2.300" /><path d="M3.500 12.500h5L6 8.500z" /></Icon></StatusButton></StatusGroup>
      <StatusGroup>
        <StatusButton label="Clean screen" width="w-[20px]"><Icon><rect x=".5" y="2.500" width="13" height="9" /><path d="M3 9.500l2.500-2.500M3 7v2.500h2.500M11 4.500L8.500 7M8.500 4.500H11V7" /></Icon></StatusButton>
        <StatusButton label="Customization"><Icon><path d="M0 2.500h13M0 7h13M0 11.500h13" strokeWidth="1.500" /></Icon></StatusButton>
      </StatusGroup>
    </div>
  );
}

export default function App() {
  return (
    <div className="flex min-h-screen flex-col bg-black py-[15px] font-['Open_Sans',sans-serif] text-[9px] leading-[12px] text-[#d9dce0]">
      <div className="flex flex-1 flex-col bg-[#222933]">
        <Header />
        <div className="flex border-l-2 border-[#222933] bg-[#3b4453]">
          <DrawPanel />
          <ModifyPanel />
          <AnnotationPanel />
          <LayersPanel />
          <BlockPanel />
          <PropertiesPanel />
          <GroupsPanel />
          <UtilitiesPanel />
          <ClipboardPanel />
          <ViewPanel />
        </div>
        <nav className="flex h-[25px] items-end border-b-4 border-[#3a424e] pl-[17px] text-[#c3c7cc]">
          <a href="#start" className="flex h-[17px] w-[98px] items-center rounded-t-[5px] bg-[#2a313b] pl-[8px]">Start</a>
          <div className="flex h-[17px] w-[100px] items-center justify-between rounded-t-[5px] bg-[#343c48] pr-[11px] pl-[9px]">
            <a href="#drawing1" className="text-[#e4e6e9]">Drawing1*</a>
            <button type="button" aria-label="Close Drawing1"><Icon w={7} h={7}><path d="M1 1l5 5M6 1L1 6" stroke="#99a0a9" strokeWidth="1.500" /></Icon></button>
          </div>
          <button type="button" aria-label="New drawing" className="ml-[3px] flex h-[17px] w-[20px] items-center justify-center rounded-t-[5px] bg-[#2a313b]">
            <Icon w={7} h={7}><path d="M3.500 0v7M0 3.500h7" strokeWidth="1.500" /></Icon>
          </button>
        </nav>
        <DrawingArea />
        <footer className="flex h-[22px] justify-between border-t border-[#2f3740]">
          <nav className="flex h-[14px] items-center gap-[3px] pl-[10px] text-[#aab0b8]">
            <a href="#model" className="flex h-full w-[45px] items-center justify-center rounded-b-[5px] bg-[#3b4453] font-bold text-[#eceef0]">Model</a>
            <a href="#layout1" className="flex h-full w-[48px] items-center justify-center rounded-b-[5px] bg-[#2b323d]">Layout1</a>
            <a href="#layout2" className="flex h-full w-[49px] items-center justify-center rounded-b-[5px] bg-[#2b323d]">Layout2</a>
            <button type="button" aria-label="New layout" className="ml-[3px] flex h-[12px] w-[17px] items-center justify-center rounded-b-[5px] bg-[#2b323d]">
              <Icon w={7} h={7}><path d="M3.500 0v7M0 3.500h7" strokeWidth="1.300" /></Icon>
            </button>
          </nav>
          <StatusBar />
        </footer>
        <div className="flex h-[4px] gap-[40px] bg-[#1b222b] pl-[352px]">
          <span className="mt-px w-[38px] bg-[#9c6136]" />
          <span className="mt-px w-[38px] bg-[#3c434c]" />
        </div>
      </div>
    </div>
  );
}
